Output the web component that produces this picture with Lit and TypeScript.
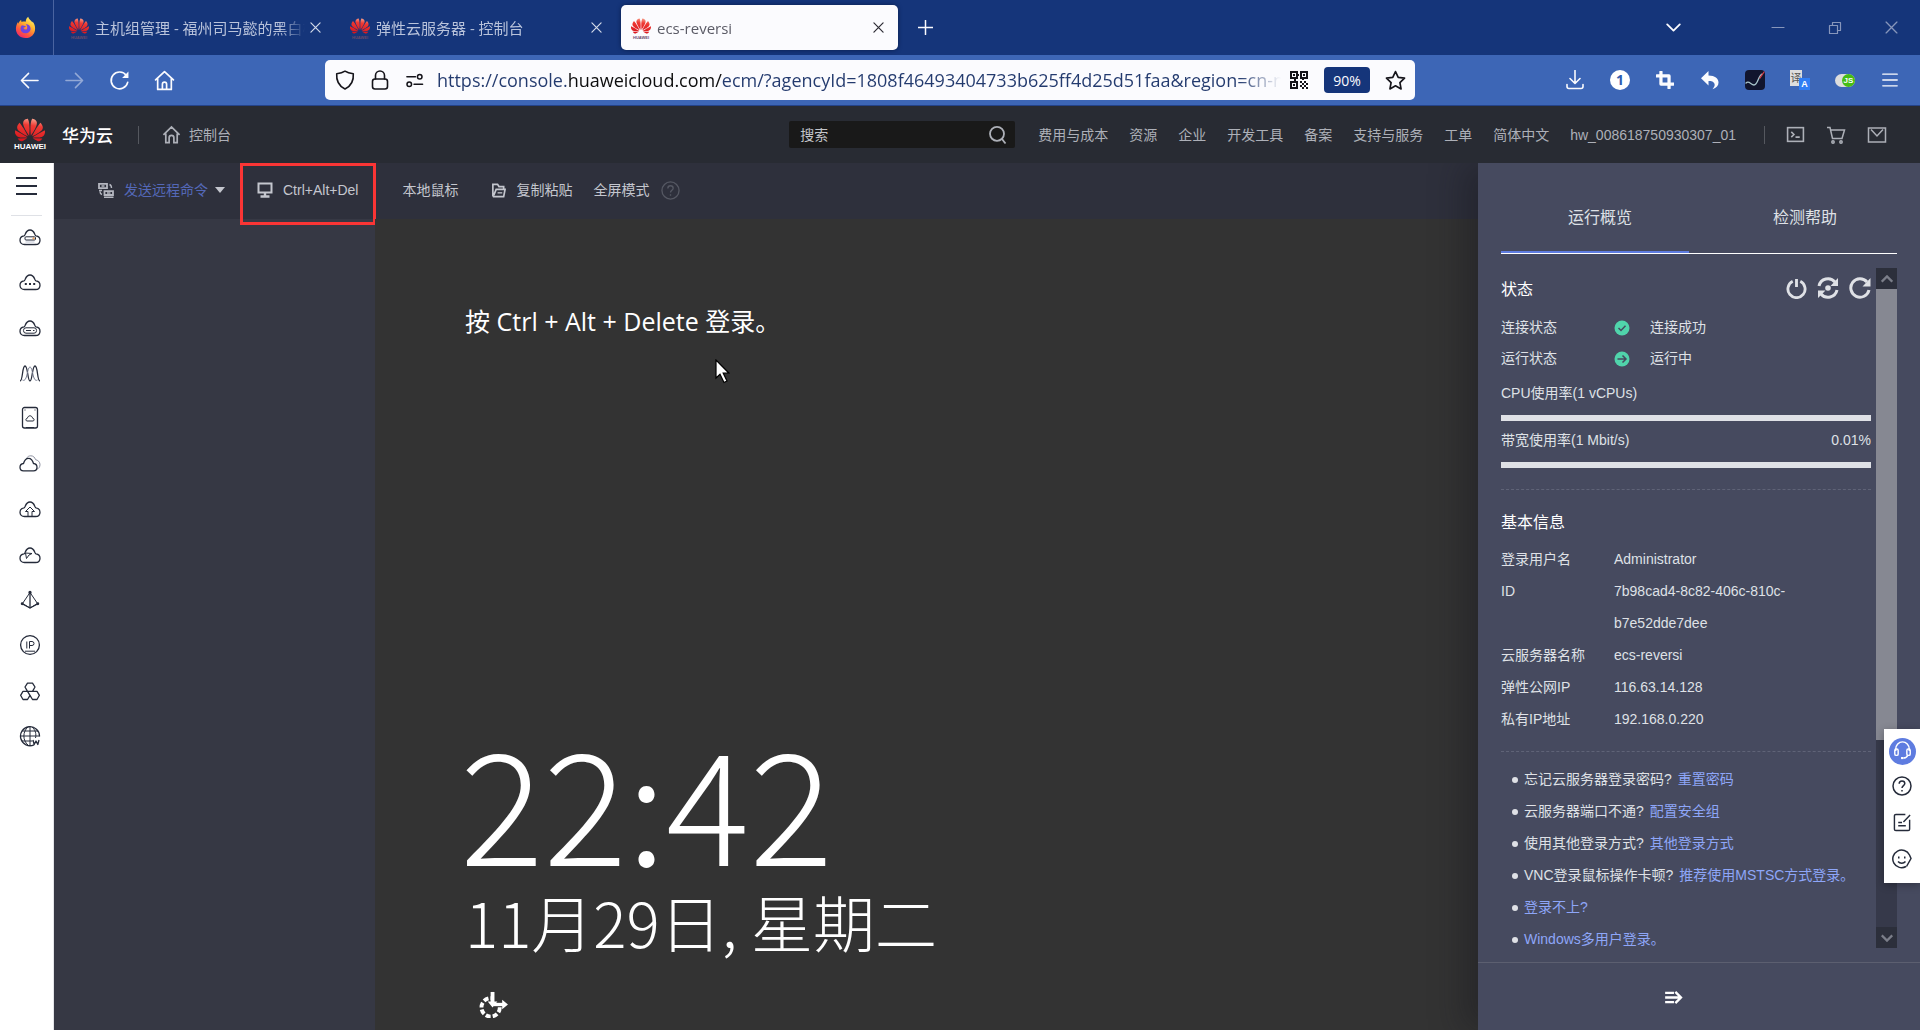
import { LitElement, html, css, svg, nothing } from "lit";
import type { SVGTemplateResult } from "lit";
import { customElement } from "lit/decorators.js";

const PETALS =
  "M3.67 6.14S1.82 7.91 1.72 9.78v.35c.08 1.51 1.22 2.4 1.22 2.4 1.83 1.79 6.26 4.04 7.3 4.55 0 0 .06.03.1-.01l.02-.04v-.04C7.52 10.8 3.67 6.14 3.67 6.14zM9.65 18.6c-.02-.08-.1-.08-.1-.08l-7.38.26c.8 1.43 2.15 2.53 3.56 2.2.96-.25 3.16-1.78 3.88-2.3.06-.05.04-.09.04-.09zm.08-.78C6.49 15.63.21 12.28.21 12.28c-.15.46-.2.9-.21 1.3v.07c0 1.07.4 1.82.4 1.82.8 1.69 2.34 2.2 2.34 2.2.7.3 1.4.31 1.4.31.12.02 4.4 0 5.54 0 .05 0 .08-.05.08-.05v-.06c0-.03-.03-.05-.03-.05zM9.06 3.19a3.42 3.42 0 00-2.57 3.15v.41c.03.6.16 1.05.16 1.05.66 2.9 3.86 7.65 4.55 8.65.05.05.1.03.1.03a.1.1 0 00.06-.1c1.06-10.6-1.11-13.42-1.11-13.42-.32.02-1.19.23-1.19.23zm8.299 2.27s-.49-1.8-2.44-2.28c0 0-.57-.14-1.17-.22 0 0-2.18 2.81-1.12 13.43.01.07.06.08.06.08.07.03.1-.03.1-.03.72-1.03 3.9-5.76 4.55-8.64 0 0 .36-1.4.02-2.34zm-2.92 13.07s-.07 0-.09.05c0 0-.01.07.03.1.7.51 2.85 2 3.88 2.3 0 0 .16.05.43.06h.14c.69-.02 1.9-.37 3-2.26l-7.4-.25zm7.83-8.41c.14-2.06-1.94-3.97-1.94-3.98 0 0-3.85 4.66-6.67 10.8 0 0-.03.08.02.13l.04.01h.06c1.06-.53 5.46-2.77 7.28-4.54 0 0 1.15-.93 1.21-2.42zm1.52 2.14s-6.28 3.37-9.52 5.55c0 0-.05.04-.03.11 0 0 .03.06.07.06 1.16 0 5.56 0 5.67-.02 0 0 .57-.02 1.27-.29 0 0 1.56-.5 2.37-2.27 0 0 .73-1.45.17-3.14z";

const CLOUD =
  "M5.5 17.5 C2.8 17.5 1 15.6 1 13.2 C1 10.8 2.8 9.2 5 8.9 C5.4 8.8 5.8 8 6.2 7.2 C7.2 4.6 9 3 11 3 C13 3 14.8 4.6 15.8 7.2 C16.2 8 16.6 8.8 17 8.9 C19.2 9.2 21 10.8 21 13.2 C21 15.6 19.2 17.5 16.5 17.5 Z";

/* Plain line icons inherit the button colour; each entry is [viewBox, shapes]. */
const ICONS: Record<string, [string, SVGTemplateResult]> = {
  firefox: ["0 0 24 24", svg`
    <defs>
      <linearGradient id="ff" x1="0.8" y1="0.05" x2="0.25" y2="1">
        <stop offset="0" stop-color="#fff36b"/><stop offset=".35" stop-color="#ffb52e"/>
        <stop offset=".7" stop-color="#ff5a3c"/><stop offset="1" stop-color="#ee2370"/>
      </linearGradient>
    </defs>
    <path fill="url(#ff)" stroke="none" d="M12 23C6 23 2 18.800 2 13.400 2 10.500 2.800 8.300 4.200 6.200L4.800 8C5.400 6 6.300 4.900 7.400 4.300L7.900 6.200C9.500 5.600 11 5.600 12.200 6 12.300 3.600 13.300 1.900 14.800.800 15 3.200 18 4.800 19.200 6.800L19.400 5.800C21.400 8.300 22 10.600 22 13.200 22 18.800 18 23 12 23Z"/>
    <path fill="#7045e0" stroke="none" d="M12 18C8.800 18 6.800 15.900 6.800 13.300 6.800 11.800 7.400 10.600 8.300 9.700L12.500 10.600 11.800 11.600 9.800 12.200C10.200 14 12 14.600 13.400 13.700 14.300 12.400 13.700 9.900 12.200 8.700 15.400 8.500 17.300 10.700 17.300 13.200 17.300 15.900 15 18 12 18Z"/>`],
  back: ["0 0 20 20", svg`<path d="M19 10H1.500M9 2.500 1.500 10 9 17.500"/>`],
  forward: ["0 0 20 20", svg`<path d="M1 10H18.500M11 2.500 18.500 10 11 17.500"/>`],
  reload: ["0 0 20 20", svg`<path d="M17.800 11.800A8 8 0 1 1 16.500 5.200"/><path d="M18.500 1.500V7.500H12.500Z" fill="currentColor" stroke="none"/>`],
  home: ["0 0 20 20", svg`<path d="M1.500 9.500 10 1.500 18.500 9.500M3.500 8V18.500H16.500V8M8 18.500V13.500A2 2 0 0 1 12 13.500V18.500"/>`],
  shield: ["0 0 20 20", svg`<path d="M10 1.200C12.500 3 15.500 3.500 18.300 3.700 18.800 10 16 16 10 19 4 16 1.200 10 1.700 3.700 4.500 3.500 7.500 3 10 1.200Z"/>`],
  lock: ["0 0 20 20", svg`<rect x="2.500" y="9" width="15" height="10" rx="2.500"/><path d="M5.500 9V5.500A4.500 4.500 0 0 1 14.500 5.500V9"/>`],
  sliders: ["0 0 20 20", svg`<path d="M2 6H11M9.500 14H18.500"/><circle cx="15.500" cy="6" r="2.400"/><circle cx="4.500" cy="14" r="2.400"/>`],
  star: ["0 0 20 20", svg`<path d="M10 1.500 12.600 7 18.600 7.800 14.200 12 15.300 18 10 15.100 4.700 18 5.800 12 1.400 7.800 7.400 7Z"/>`],
  qr: ["0 0 18 18", svg`<g fill="currentColor" stroke="none"><path fill-rule="evenodd" d="M0 0H8V8H0ZM2 2V6H6V2ZM10 0H18V8H10ZM12 2V6H16V2ZM0 10H8V18H0ZM2 12V16H6V12Z"/><path d="M3 3H5V5H3ZM13 3H15V5H13ZM3 13H5V15H3ZM10 10H12V12H10ZM14 10H16V12H14ZM12 12H14V14H12ZM16 12H18V14H16ZM10 14H12V16H10ZM14 14H16V16H14ZM12 16H14V18H12ZM16 16H18V18H16ZM8 3H9V5H8ZM4 8H6V10H4ZM12 8H14V9H12Z"/></g>`],
  download: ["0 0 20 20", svg`<path d="M10 .5V13M5 8.500 10 13.500 15 8.500M2 14.500V16.500A2 2 0 0 0 4 18.500H16A2 2 0 0 0 18 16.500V14.500"/>`],
  crop: ["0 0 20 20", svg`<path stroke-width="3.600" d="M5.500 1V14.500H19M1 5.500H14.500V19"/>`],
  undo: ["0 0 20 20", svg`<path fill="currentColor" stroke="none" d="M8.500 1V5.500C15 5.500 18.500 8.500 18.500 12.500 18.500 15.500 16.500 18 12.500 19.200 14.500 17 15 15.500 14.500 13.800 13.800 11.500 11.500 11 8.500 11V15.500L1 8.200Z"/>`],
  menu: ["0 0 20 20", svg`<path d="M2 3.500H18M2 10H18M2 16.500H18"/>`],
  close: ["0 0 12 12", svg`<path d="M1 1 11 11M11 1 1 11"/>`],
  plus: ["0 0 16 16", svg`<path d="M8 .5V15.500M.5 8H15.500"/>`],
  down: ["0 0 16 10", svg`<path d="M1 1.500 8 8.500 15 1.500"/>`],
  up: ["0 0 16 10", svg`<path d="M1 8.500 8 1.500 15 8.500"/>`],
  minimize: ["0 0 14 14", svg`<path d="M1 6.500H13"/>`],
  restore: ["0 0 14 14", svg`<path d="M1.500 4.500H9.500V12.500H1.500ZM4.500 4V1.500H12.500V9.500H10"/>`],
  house: ["0 0 20 20", svg`<path d="M1.500 10.500 10 2 18.500 10.500M4 9V18.500H7.500V13.500A2.500 2.500 0 0 1 12.500 13.500V18.500H16V9"/>`],
  search: ["0 0 20 20", svg`<circle cx="9" cy="8.800" r="7"/><path d="M14 14 17.500 18.500"/>`],
  terminal: ["0 0 18 18", svg`<rect x="1.500" y="2.500" width="15" height="13"/><path d="M5 6.500 7.500 9 5 11.500M9 11.500H13"/>`],
  cart: ["0 0 20 20", svg`<path d="M1 2.500H4L6.500 13.500H16L18.500 5H5"/><circle cx="7" cy="17" r="1.200"/><circle cx="15" cy="17" r="1.200"/>`],
  mail: ["0 0 20 20", svg`<rect x="1.500" y="3" width="17" height="14"/><path d="M4 4.500 10 11 16 4.500"/>`],
  remote: ["0 0 16 16", svg`<path stroke-width="1.800" d="M1 1.800H9V6.200H1ZM6.500 9.200H15V13H6.500Z"/><path d="M3.500 4H6.500M9 11H12.500M6 15.200H15.500M1 8.500H4M2 9.500C2 11 2.500 12 4 12.500M11.500 2.500C13 3 13.500 4 13.500 6"/>`],
  monitor: ["0 0 16 16", svg`<path stroke-width="2" d="M1.500 1.500H14.500V10.500H1.500Z"/><path stroke-width="2.400" d="M8 11V14M3.500 14.500H12.500"/>`],
  folder: ["0 0 16 16", svg`<path stroke-width="1.800" d="M2 14.500V1.500H7L8.500 3.800H13.500V6.500M2 14.500H13.500L15 6.800H5.500L3 13"/><path d="M7 10.500H12"/>`],
  help: ["0 0 20 20", svg`<circle cx="10" cy="10" r="9"/><path d="M7.200 7.800C7.200 6 8.400 5 10 5S12.800 6 12.800 7.600C12.800 9.600 10 9.800 10 12M10 14V15.500"/>`],
  ecs: ["0 0 22 20", svg`<path d=${CLOUD}/><path fill="#dfe1e8" stroke="none" d="M6.500 13.500H15.500V16.800H6.500Z"/><rect x="6" y="9.800" width="10.500" height="3.200" rx="1" stroke-width="1"/><circle cx="14.600" cy="11.400" r=".7" stroke="#e0883a" stroke-width="1"/>`],
  dots: ["0 0 22 20", svg`<path d=${CLOUD}/><path stroke-width="2" d="M5.800 12H7.800M10 12H12M14.200 12H16.200"/>`],
  disk: ["0 0 22 20", svg`<path d=${CLOUD}/><rect x="4.500" y="9.800" width="13" height="5.400" rx="2.500" stroke-width="1"/><path stroke-width="1" d="M7 12.500H12M14 12.500H15.500"/>`],
  wave: ["0 0 22 20", svg`<path d="M1 18C4 18 3 3 6 3S8.500 18 11 18 13 3 16 3 18 18 21 18"/><path stroke-width="1" stroke="#7b8094" d="M3.500 17C8.500 20 8 4 11 4S13.500 20 18.500 17"/>`],
  drive: ["0 0 22 24", svg`<rect x="3.500" y="1.500" width="15" height="20.500" rx="2"/><path stroke-width="1" d="M8 15C6.500 15 6.500 12.200 8.400 12.200 9 9 13 9 13.600 12.200 15.500 12.200 15.500 15 14 15Z"/><path stroke-width="1.200" d="M5.500 4H6.500M15.500 4H16.500M7 21.500H15"/>`],
  clouds: ["0 0 22 20", svg`<path stroke-width="1" stroke="#8d91a1" d="M7.500 4.500C8.500 2.500 10 1.800 11.800 1.800 14.300 1.800 15.800 3.400 16.500 5.600 19 6.200 21 8 21 10.500 21 13 19.800 14.500 18 15.200"/><path d="M4.500 16.800C2.300 16.800 1 15.200 1 13.200 1 11.300 2.300 9.800 4.500 9.500 5.500 5.700 7 4.300 9.500 4.300S13.500 5.700 14.500 9.500C16.700 9.800 18 11.300 18 13.200S16.700 16.800 14.500 16.800Z"/>`],
  upload: ["0 0 22 20", svg`<path d=${CLOUD}/><path stroke-width="1" d="M9 17.500V12.500H6.500L11 8 15.500 12.500H13V17.500"/>`],
  gauge: ["0 0 22 20", svg`<path d=${CLOUD}/><path stroke-width="1" d="M6.500 8 13 8.500 10 10 7.500 13.500 6.500 8"/>`],
  pyramid: ["0 0 22 20", svg`<path stroke-width="1" d="M11 2.500 3.500 13.500 11 18 18.500 13.500Z"/><path d="M11 3V17M3.500 14 11 18 18.500 14"/><circle cx="11" cy="2.500" r="1" fill="currentColor"/><circle cx="3.200" cy="13.800" r=".8"/><circle cx="18.800" cy="13.800" r=".8"/>`],
  ip: ["0 0 22 22", svg`<circle cx="11" cy="11" r="9.400"/><path stroke-width="1" d="M7.800 7.500V14.500M10.500 14.500V7.500H13A2 2 0 0 1 13 11.500H10.500M6 17.200H16"/>`],
  hexes: ["0 0 22 20", svg`<path d="M8.500 2.200H13.500L16 6 13.500 10.300H8.500L6 6ZM4 10.300H8.500L11 14.300 8.500 18.500H4L1.600 14.300ZM13.500 10.300H18L20.400 14.300 18 18.500H13.500L11 14.300"/>`],
  globe: ["0 0 22 22", svg`<path d="M15 19.800A9.500 9.500 0 1 1 20.500 11.500"/><path stroke-width="1" d="M11 1.500V20.500M1.500 11H20.500M3 6H19M3 16H13.500M9 2C3.500 6.500 3.500 15.500 9 20M13 2C16.500 5 17.500 9 16.500 13"/><path stroke-width="1.300" d="M14 15 15.200 19.500 17 16 18.800 19.500 20 15"/>`],
  power: ["0 0 22 22", svg`<path stroke-width="3" d="M7 3.500A9 9 0 1 0 15 3.500M11 1V9.500"/>`],
  restart: ["0 0 22 22", svg`<path stroke-width="3" d="M2 9A9.200 9.200 0 0 1 18 5M20 13A9.200 9.200 0 0 1 4 17"/><path fill="currentColor" stroke="none" d="M21 1V9H13.500ZM1 21V13.500H8.500Z"/><circle cx="11" cy="11" r="2.800" fill="currentColor" stroke="none"/>`],
  refresh: ["0 0 22 22", svg`<path stroke-width="3" d="M20 13A9.200 9.200 0 1 1 18 5"/><path fill="currentColor" stroke="none" d="M21.500 1V9.500H13.500Z"/>`],
  ok: ["0 0 16 16", svg`<circle cx="8" cy="8" r="7.500" fill="#50d4ab" stroke="none"/><path d="M4.500 8 7 10.500 11.500 5.800"/>`],
  go: ["0 0 16 16", svg`<circle cx="8" cy="8" r="7.500" fill="#50d4ab" stroke="none"/><path d="M3.500 8H12M8.500 4.500 12 8 8.500 11.500"/>`],
  collapse: ["0 0 20 14", svg`<path stroke-width="2.600" d="M1 2H10.500M1 7H17M1 12H10.500M12 1 18 7 12 13"/>`],
  headset: ["0 0 28 28", svg`<path d="M7 13.500V11.500A7 7.500 0 0 1 21 11.500V13.500M19.500 18C18.500 20 17 20.800 15 20.800"/><rect x="6" y="11.500" width="3.500" height="6.500" rx="1.500"/><rect x="18.500" y="11.500" width="3.500" height="6.500" rx="1.500"/><path stroke-width="2.200" d="M12.500 20.800H15"/>`],
  edit: ["0 0 20 20", svg`<path d="M13 1.500H3A1.500 1.500 0 0 0 1.500 3V17A1.500 1.500 0 0 0 3 18.500H16A1.500 1.500 0 0 0 17.500 17V7M18 2 11 9.500M5.500 10H9.500M5.500 13.500H13.500"/>`],
  smile: ["0 0 20 20", svg`<path d="M14 17.500A8.800 8.800 0 1 1 17.500 6L19 9.500 14.500 17.500M6 12.500C8 14.800 11.500 14.800 13.500 12.500"/><path stroke-width="2" d="M6 8.500H7.500M12 8.500H13.500"/>`],
  ease: ["0 0 30 28", svg`<circle cx="12" cy="17" r="9.500" stroke-width="4" stroke-dasharray="5.200 2.200"/><path fill="#333" stroke="none" d="M13 0H30V14H13Z"/><path stroke-width="4" d="M14 1V12"/><path fill="currentColor" stroke="none" d="M9 11H19L14 17ZM24 9 30 14 24 19Z"/><path stroke-width="3.500" d="M15 14H25"/>`],
  pointer: ["0 0 15 25", svg`<path d="M1 1V19L5 15.200 9 23.500 12 22 8.200 14H13.800Z" fill="#fff" stroke="#000" stroke-width="1.200"/>`],
  chart: ["0 0 20 20", svg`<rect width="20" height="20" rx="4" fill="#11152e" stroke="none"/><path stroke="#a9c6cc" stroke-width="1.300" d="M1 13C4 10 6 15 9 15 13 15 13 6 17 4"/><path stroke="#d23c48" stroke-width="1.300" d="M15 8 19 2"/>`],
};

function icon(name: string, w: number, h = w) {
  const [box, shapes] = ICONS[name];
  return html`<svg class="icon" width=${w} height=${h} viewBox=${box} aria-hidden="true">${shapes}</svg>`;
}

function brandMark(w: number) {
  return html`<svg class="icon" width=${w} height=${w} viewBox="0 0 24 24" aria-hidden="true">
    <defs><linearGradient id="hw" x1=".6" y1="0" x2=".4" y2="1">
      <stop offset="0" stop-color="#f7a08c"/><stop offset=".3" stop-color="#ef3a34"/><stop offset="1" stop-color="#d8141c"/>
    </linearGradient></defs>
    <path d=${PETALS} fill="url(#hw)" stroke="none"/></svg>`;
}

const SANS = css`"Liberation Sans", "Noto Sans CJK SC", sans-serif`;

@customElement("browser-chrome")
export class BrowserChrome extends LitElement {
  static styles = css`
    :host { display: block; font-family: "Open Sans", "Noto Sans CJK SC", sans-serif; color: #fbfbfe; }
    * { box-sizing: border-box; }
    button { display: flex; align-items: center; justify-content: center; padding: 0; border: 0; background: none; color: inherit; font: inherit; }
    .icon { display: block; fill: none; stroke: currentColor; stroke-width: 1.6; stroke-linecap: round; stroke-linejoin: round; flex: none; }
    .tabs { display: flex; align-items: center; height: 55px; background: #15357a; }
    .pinned { display: flex; align-items: center; justify-content: flex-end; width: 54px; height: 55px; padding-right: 16px; border-right: 1px solid #4a64a0; }
    .strip { display: flex; padding-left: 4px; }
    .tab { display: flex; align-items: center; width: 281px; height: 45px; padding: 0 14px 0 11px; border-radius: 5px; color: #b9c3db; font-size: 15px; }
    .tab.on { background: #fbfbfe; color: #5b5b66; width: 277px; margin-left: 1px; padding: 0 10px; box-shadow: 0 0 4px #0b1f4d; }
    .fav { display: flex; flex-direction: column; align-items: center; width: 20px; flex: none; }
    .word { font: 700 4px/4px "Liberation Sans", sans-serif; color: #6a4a6c; }
    .name { flex: 1; min-width: 0; margin-left: 6px; overflow: hidden; white-space: nowrap; mask-image: linear-gradient(90deg, #000 88%, transparent); }
    .x { width: 20px; height: 20px; color: #d4dbea; }
    .on .x { color: #2b2a33; }
    .x .icon { stroke-width: 1.300; }
    .new { width: 54px; height: 40px; }
    .window { display: flex; align-items: center; margin-left: auto; gap: 12px; padding-right: 6px; color: #8796bb; }
    .window button { width: 45px; height: 40px; }
    .window .icon { stroke-width: 1.200; }
    .window .all { color: #fbfbfe; margin-right: 47px; }
    .window .all .icon { stroke-width: 2; }
    .bar { display: flex; align-items: center; height: 51px; background: #3d66b6; border-bottom: 1px solid #24438a; }
    .nav { display: flex; gap: 5px; padding-left: 9px; width: 325px; flex: none; }
    .nav button, .tools button { width: 40px; height: 40px; }
    .nav .off { opacity: .45; }
    .field { flex: 1; display: flex; align-items: center; min-width: 0; height: 40px; padding-right: 2px; border-radius: 5px; background: #fbfbfe; color: #15141a; }
    .field button { width: 35px; height: 36px; }
    .lead { display: flex; padding-left: 2px; }
    .url { flex: 1; min-width: 0; margin-left: 5px; height: 36px; padding: 0; border: 0; outline: 0; font: 18px "Open Sans", sans-serif; color: transparent;
      background: linear-gradient(90deg, #233a6e 130px, #0c0c0d 130px 285px, #233a6e 285px); background-clip: text; -webkit-background-clip: text;
      mask-image: linear-gradient(90deg, #000 95%, transparent); }
    .field .zoom { width: 46px; height: 26px; margin: 0 8px; border-radius: 4px; background: #15357a; color: #fbfbfe; font-size: 14px; }
    .tools { display: flex; gap: 5px; width: 505px; flex: none; justify-content: flex-end; padding-right: 10px; }
    .one { display: flex; align-items: center; justify-content: center; width: 20px; height: 20px; border-radius: 50%; background: #fff; color: #2f5bb0; font: 700 14px/20px "Open Sans", sans-serif; }
    .trans { display: flex; align-items: flex-end; width: 20px; height: 20px; }
    .t1 { width: 12px; height: 16px; margin-bottom: 4px; background: #ddd; color: #555; font: 11px/15px "Noto Sans CJK SC", sans-serif; }
    .t2 { width: 11px; height: 12px; margin-left: -3px; background: #2f7df4; color: #fff; font: 700 9px/12px "Liberation Sans", sans-serif; }
    .js { display: flex; justify-content: flex-end; width: 20px; height: 13px; border-radius: 7px; background: #ddd; }
    .js span { width: 13px; height: 13px; border-radius: 50%; background: #45bd12; font: 700 8px/13px "Liberation Sans", sans-serif; }
  `;

  private tab(name: string, on = false) {
    return html`<div class="tab ${on ? "on" : ""}" role="tab" aria-selected=${on}>
      <span class="fav">${brandMark(20)}<span class="word">HUAWEI</span></span>
      <span class="name">${name}</span>
      <button class="x" aria-label="关闭标签页">${icon("close", 11)}</button>
    </div>`;
  }

  render() {
    return html`
      <div class="tabs">
        <div class="pinned">${icon("firefox", 23)}</div>
        <div class="strip" role="tablist">
          ${this.tab("主机组管理 - 福州司马懿的黑白棋")}
          ${this.tab("弹性云服务器 - 控制台")}
          ${this.tab("ecs-reversi", true)}
        </div>
        <button class="new" aria-label="新建标签页">${icon("plus", 15)}</button>
        <div class="window">
          <button class="all" aria-label="列出所有标签页">${icon("down", 15, 9)}</button>
          <button aria-label="最小化">${icon("minimize", 14)}</button>
          <button aria-label="还原">${icon("restore", 14)}</button>
          <button aria-label="关闭">${icon("close", 13)}</button>
        </div>
      </div>
      <div class="bar">
        <div class="nav">
          <button aria-label="后退">${icon("back", 19)}</button>
          <button class="off" aria-label="前进">${icon("forward", 19)}</button>
          <button aria-label="刷新">${icon("reload", 21)}</button>
          <button aria-label="主页">${icon("home", 21)}</button>
        </div>
        <div class="field">
          <div class="lead">
            <button aria-label="跟踪保护">${icon("shield", 20)}</button>
            <button aria-label="连接安全">${icon("lock", 20)}</button>
            <button aria-label="权限">${icon("sliders", 19)}</button>
          </div>
          <input class="url" aria-label="网址" value="https://console.huaweicloud.com/ecm/?agencyId=1808f46493404733b625ff4d25d51faa&amp;region=cn-north-4">
          <button aria-label="二维码">${icon("qr", 18)}</button>
          <button class="zoom">90%</button>
          <button aria-label="收藏">${icon("star", 21)}</button>
        </div>
        <div class="tools">
          <button aria-label="下载">${icon("download", 20)}</button>
          <button aria-label="密码管理"><span class="one">1</span></button>
          <button aria-label="截图">${icon("crop", 18)}</button>
          <button aria-label="撤销">${icon("undo", 20)}</button>
          <button aria-label="图表">${icon("chart", 20)}</button>
          <button aria-label="翻译"><span class="trans"><span class="t1">译</span><span class="t2">A</span></span></button>
          <button aria-label="脚本"><span class="js"><span>JS</span></span></button>
          <button aria-label="菜单">${icon("menu", 18)}</button>
        </div>
      </div>`;
  }
}

@customElement("console-header")
export class ConsoleHeader extends LitElement {
  static styles = css`
    :host { display: block; font-family: ${SANS}; }
    .head { display: flex; align-items: center; height: 57px; background: #282b33; color: #adb0b8; font-size: 14px; line-height: 20px; }
    .icon { display: block; fill: none; stroke: currentColor; stroke-width: 1.8; flex: none; }
    a { color: inherit; text-decoration: none; white-space: nowrap; }
    .logo { display: flex; flex-direction: column; align-items: center; width: 30px; margin-left: 15px; }
    .word { font: 700 8px/8px "Liberation Sans", sans-serif; color: #fff; }
    .logo .icon { margin: -3px 0 -2px; }
    .brand { margin-left: 17px; font: 500 17px/24px "Noto Sans CJK SC", sans-serif; color: #fff; }
    .rule { width: 1px; height: 18px; background: #55585f; }
    .left { margin-left: 25px; }
    .home { display: flex; align-items: center; gap: 8px; margin-left: 23px; }
    .search { display: flex; align-items: center; width: 226px; height: 27px; margin-left: auto; padding: 0 7px 0 11px; border-radius: 2px; background: #191919; box-sizing: border-box; }
    .search input { flex: 1; min-width: 0; height: 20px; padding: 0; border: 0; outline: 0; background: none; font: inherit; color: #adb0b8; }
    .search input::placeholder { color: #c3c5ca; opacity: 1; }
    button { display: flex; padding: 0; border: 0; background: none; color: inherit; }
    .links { display: flex; align-items: baseline; gap: 21px; margin-left: 23px; }
    .right { margin-left: 28px; }
    .acts { display: flex; gap: 21px; margin: 0 33px 0 21px; }
    .acts .icon { stroke-width: 1.500; }
  `;
  render() {
    const links = ["费用与成本", "资源", "企业", "开发工具", "备案", "支持与服务", "工单", "简体中文", "hw_008618750930307_01"];
    return html`<header class="head">
      <a class="logo" href="#" aria-label="华为云">${brandMark(30)}<span class="word">HUAWEI</span></a>
      <span class="brand">华为云</span>
      <span class="rule left"></span>
      <a class="home" href="#">${icon("house", 19)}控制台</a>
      <div class="search">
        <input type="search" placeholder="搜索" aria-label="搜索">
        <button aria-label="执行搜索">${icon("search", 20)}</button>
      </div>
      <nav class="links">${links.map((l) => html`<a href="#">${l}</a>`)}</nav>
      <span class="rule right"></span>
      <div class="acts">
        <button aria-label="命令行">${icon("terminal", 19)}</button>
        <button aria-label="购物车">${icon("cart", 20)}</button>
        <button aria-label="消息">${icon("mail", 20)}</button>
      </div>
    </header>`;
  }
}

@customElement("service-rail")
export class ServiceRail extends LitElement {
  static styles = css`
    :host { display: block; width: 54px; flex: none; background: #fff; color: #252b3a; border-right: 1px solid #e3e4e8; box-sizing: border-box; }
    nav { display: flex; flex-direction: column; align-items: center; }
    .icon { display: block; fill: none; stroke: currentColor; stroke-width: 1.3; stroke-linejoin: round; }
    button { display: flex; padding: 0; border: 0; background: none; color: inherit; }
    .menu { margin: 12px 0 0; }
    .menu .icon { stroke-width: 2; }
    .rule { width: 31px; height: 1px; margin: 20px 0 10px; background: #dfe1e6; }
    .list { display: flex; flex-direction: column; justify-content: space-between; height: 521px; margin: 0 0 0 6px; padding: 0; list-style: none; }
    .list a { display: flex; align-items: center; justify-content: center; height: 22px; color: inherit; }
  `;
  render() {
    const items: [string, string, number][] = [
      ["ecs", "弹性云服务器", 20], ["dots", "云耀云服务器", 20], ["disk", "裸金属服务器", 20], ["wave", "弹性伸缩", 20],
      ["drive", "云硬盘", 24], ["clouds", "专属云", 20], ["upload", "对象存储", 20], ["gauge", "云监控", 20],
      ["pyramid", "负载均衡", 20], ["ip", "弹性公网IP", 22], ["hexes", "虚拟私有云", 20], ["globe", "域名注册", 22],
    ];
    return html`<nav>
      <button class="menu" aria-label="服务列表"><svg class="icon" width="21" height="20" viewBox="0 0 21 20"><path d="M0 3H21M0 11H21M0 19H21"/></svg></button>
      <div class="rule"></div>
      <ul class="list">${items.map(([k, t, h]) => html`<li><a href="#" aria-label=${t}>${icon(k, 22, h)}</a></li>`)}</ul>
    </nav>`;
  }
}

@customElement("remote-desktop")
export class RemoteDesktop extends LitElement {
  static styles = css`
    :host { display: flex; flex-direction: column; flex: 1; min-width: 0; font-family: ${SANS}; }
    .icon { display: block; fill: none; stroke: currentColor; stroke-width: 1.4; flex: none; }
    .tools { display: flex; align-items: center; height: 56px; padding: 0 0 2px 36px; background: #2e303c; color: #c4c6ce; font-size: 14px; box-sizing: border-box; }
    button { display: flex; align-items: center; gap: 10px; height: 30px; padding: 0 8px; border: 0; background: none; color: inherit; font: inherit; line-height: 20px; white-space: nowrap; }
    .cmd { color: #5468b8; }
    .cmd .icon { color: #b5b7c0; }
    .caret { border: 5px solid transparent; border-top: 6px solid #c4c6ce; border-bottom: 0; margin-left: -3px; }
    .keys { position: relative; margin-left: 16px; }
    .keys::after { content: ""; position: absolute; left: -9px; right: -10px; top: -12px; height: 56px; border: 3px solid #fa3535; }
    .mouse { margin-left: 28px; }
    .paste { margin-left: 17px; }
    .full { margin-left: 5px; }
    .q { color: #555863; padding: 0 4px; }
    .stage { display: flex; flex: 1; }
    .gutter { width: 321px; flex: none; background: #363844; }
    .screen { position: relative; flex: 1; display: flex; flex-direction: column; padding: 84px 90px 11px; background: #333; color: #fff; font-family: "Noto Sans CJK SC", sans-serif; }
    .hint { margin: 0; font: 25px/36px "Open Sans", "Noto Sans CJK SC", sans-serif; }
    .latin { font-weight: 500; }
    .pointer { position: absolute; left: 340px; top: 140px; }
    .time { margin: auto 0 0 -5px; font-size: 156px; line-height: 130px; font-weight: 300; }
    .date { font-size: 62px; line-height: 90px; font-weight: 300; margin-top: 13px; }
    .ease { margin: 23px 0 0 6px; }
    .ease .icon { color: #fff; }
  `;
  render() {
    return html`
      <div class="tools">
        <button class="cmd">${icon("remote", 16)}发送远程命令<span class="caret"></span></button>
        <button class="keys">${icon("monitor", 16)}Ctrl+Alt+Del</button>
        <button class="mouse">本地鼠标</button>
        <button class="paste">${icon("folder", 15)}复制粘贴</button>
        <button class="full">全屏模式</button>
        <button class="q" aria-label="帮助">${icon("help", 19)}</button>
      </div>
      <div class="stage">
        <div class="gutter"></div>
        <main class="screen">
          <p class="hint">按 <span class="latin">Ctrl + Alt + Delete</span> 登录。</p>
          <div class="pointer">${icon("pointer", 15, 25)}</div>
          <div class="time">22:42</div>
          <div class="date">11月29日, 星期二</div>
          <button class="ease" aria-label="轻松使用">${icon("ease", 29, 27)}</button>
        </main>
      </div>`;
  }
}

@customElement("status-panel")
export class StatusPanel extends LitElement {
  static styles = css`
    :host { display: flex; flex-direction: column; width: 442px; flex: none; position: relative; background: #464a5f; color: #dfe1e6; font-family: ${SANS}; font-size: 14px; box-shadow: -16px 0 30px rgba(20, 20, 26, .35); }
    * { box-sizing: border-box; }
    .icon { display: block; fill: none; stroke: currentColor; stroke-width: 1.5; flex: none; }
    button { display: flex; align-items: center; justify-content: center; padding: 0; border: 0; background: none; color: inherit; font: inherit; }
    .tabs { display: flex; height: 91px; margin: 0 23px; padding-top: 18px; border-bottom: 1px solid #fff; }
    .tabs button { flex: none; width: 188px; height: 72px; padding-left: 10px; font-size: 16px; border-bottom: 2px solid transparent; }
    .tabs .on { border-color: #5e7ce0; }
    .tabs button + button { width: 208px; padding: 0 0 0 24px; }
    .scroll { display: flex; gap: 5px; margin: 14px 23px 0; height: 680px; }
    .body { flex: 1; min-width: 0; }
    h2 { margin: 0; color: #fff; font: 16px/24px ${SANS}; }
    .top { display: flex; align-items: center; height: 24px; margin-top: 10px; }
    .acts { display: flex; gap: 10px; margin: -4px 0 0 auto; }
    dl { margin: 0; display: grid; grid-template-columns: 113px 1fr; line-height: 32px; }
    dd { margin: 0; max-width: 190px; }
    .state { margin-top: 10px; line-height: 31px; }
    .state dd { display: flex; align-items: center; gap: 20px; color: #dfe1e6; }
    .state .icon { color: #464a5f; }
    .meter { display: flex; justify-content: space-between; line-height: 20px; margin-top: 9px; }
    progress { display: block; width: 100%; height: 6px; margin-top: 12px; border: 0; appearance: none; -webkit-appearance: none; background: #dfe1e6; }
    progress::-webkit-progress-bar { background: #dfe1e6; }
    progress::-webkit-progress-value { background: #5e7ce0; }
    hr { height: 0; margin: 16px 0 21px; border: 0; border-top: 1px dashed #5f6377; }
    progress + hr { margin-top: 21px; }
    .info { margin-top: 8px; }
    ul { margin: -10px 0 0; padding: 0 0 0 23px; list-style: none; line-height: 32px; }
    li { display: flex; align-items: center; white-space: nowrap; }
    li::before { content: ""; width: 6px; height: 6px; margin: 1px 6px 0 -12px; border-radius: 50%; background: #dfe1e6; }
    a { color: #8ea6f8; text-decoration: none; }
    .q { margin-right: 6px; }
    .track { display: flex; flex-direction: column; width: 21px; background: #36394a; }
    .track button { height: 21px; background: #2c2f3b; color: #7b7e89; }
    .track .icon { stroke-width: 3; }
    .thumb { flex: 0 1 451px; background: #868892; }
    .end { margin-top: auto; }
    .foot { display: flex; align-items: center; justify-content: center; flex: 1; margin-top: 14px; border-top: 1px solid #5c5f70; color: #fff; }
    .foot button { margin-right: 52px; padding-top: 2px; }
    .float { position: absolute; right: 0; top: 566px; display: flex; flex-direction: column; align-items: center; gap: 17px; width: 36px; height: 154px; padding: 9px 0 13px; background: #fff; color: #252b3a; box-shadow: 0 2px 8px rgba(0, 0, 0, .3); }
    .agent { width: 27px; height: 27px; margin-bottom: -6px; border-radius: 50%; background: #5e7ce0; color: #fff; }
  `;
  render() {
    const info = [
      ["登录用户名", "Administrator"], ["ID", "7b98cad4-8c82-406c-810c-b7e52dde7dee"],
      ["云服务器名称", "ecs-reversi"], ["弹性公网IP", "116.63.14.128"], ["私有IP地址", "192.168.0.220"],
    ];
    const faq = [
      ["忘记云服务器登录密码?", "重置密码"], ["云服务器端口不通?", "配置安全组"], ["使用其他登录方式?", "其他登录方式"],
      ["VNC登录鼠标操作卡顿?", "推荐使用MSTSC方式登录。"], ["", "登录不上?"], ["", "Windows多用户登录。"],
    ];
    return html`
      <div class="tabs" role="tablist">
        <button class="on" role="tab" aria-selected="true">运行概览</button>
        <button role="tab" aria-selected="false">检测帮助</button>
      </div>
      <div class="scroll">
        <div class="body">
          <div class="top"><h2>状态</h2>
            <div class="acts">
              <button aria-label="开关机">${icon("power", 21)}</button>
              <button aria-label="重启">${icon("restart", 22)}</button>
              <button aria-label="刷新">${icon("refresh", 22)}</button>
            </div>
          </div>
          <dl class="state">
            <dt>连接状态</dt><dd>${icon("ok", 16)}连接成功</dd>
            <dt>运行状态</dt><dd>${icon("go", 16)}运行中</dd>
          </dl>
          <div class="meter"><label for="cpu">CPU使用率(1 vCPUs)</label></div>
          <progress id="cpu" max="100" value="0"></progress>
          <div class="meter"><label for="net">带宽使用率(1 Mbit/s)</label><span>0.01%</span></div>
          <progress id="net" max="100" value="0"></progress>
          <hr>
          <h2>基本信息</h2>
          <dl class="info">${info.map(([k, v]) => html`<dt>${k}</dt><dd>${v}</dd>`)}</dl>
          <hr>
          <ul>${faq.map(([q, a]) => html`<li>${q ? html`<span class="q">${q}</span>` : nothing}<a href="#">${a}</a></li>`)}</ul>
        </div>
        <div class="track">
          <button aria-label="向上滚动">${icon("up", 12, 8)}</button>
          <div class="thumb"></div>
          <button class="end" aria-label="向下滚动">${icon("down", 12, 8)}</button>
        </div>
      </div>
      <div class="foot"><button aria-label="收起">${icon("collapse", 19, 13)}</button></div>
      <div class="float">
        <button class="agent" aria-label="在线客服">${icon("headset", 27)}</button>
        <button aria-label="帮助">${icon("help", 20)}</button>
        <button aria-label="建议">${icon("edit", 19)}</button>
        <button aria-label="评价">${icon("smile", 20)}</button>
      </div>`;
  }
}

@customElement("app-root")
export class AppRoot extends LitElement {
  static styles = css`
    :host { display: flex; flex-direction: column; min-height: 100vh; }
    .work { display: flex; flex: 1; overflow: hidden; }
  `;
  render() {
    return html`
      <browser-chrome></browser-chrome>
      <console-header></console-header>
      <div class="work">
        <service-rail></service-rail>
        <remote-desktop></remote-desktop>
        <status-panel></status-panel>
      </div>`;
  }
}
